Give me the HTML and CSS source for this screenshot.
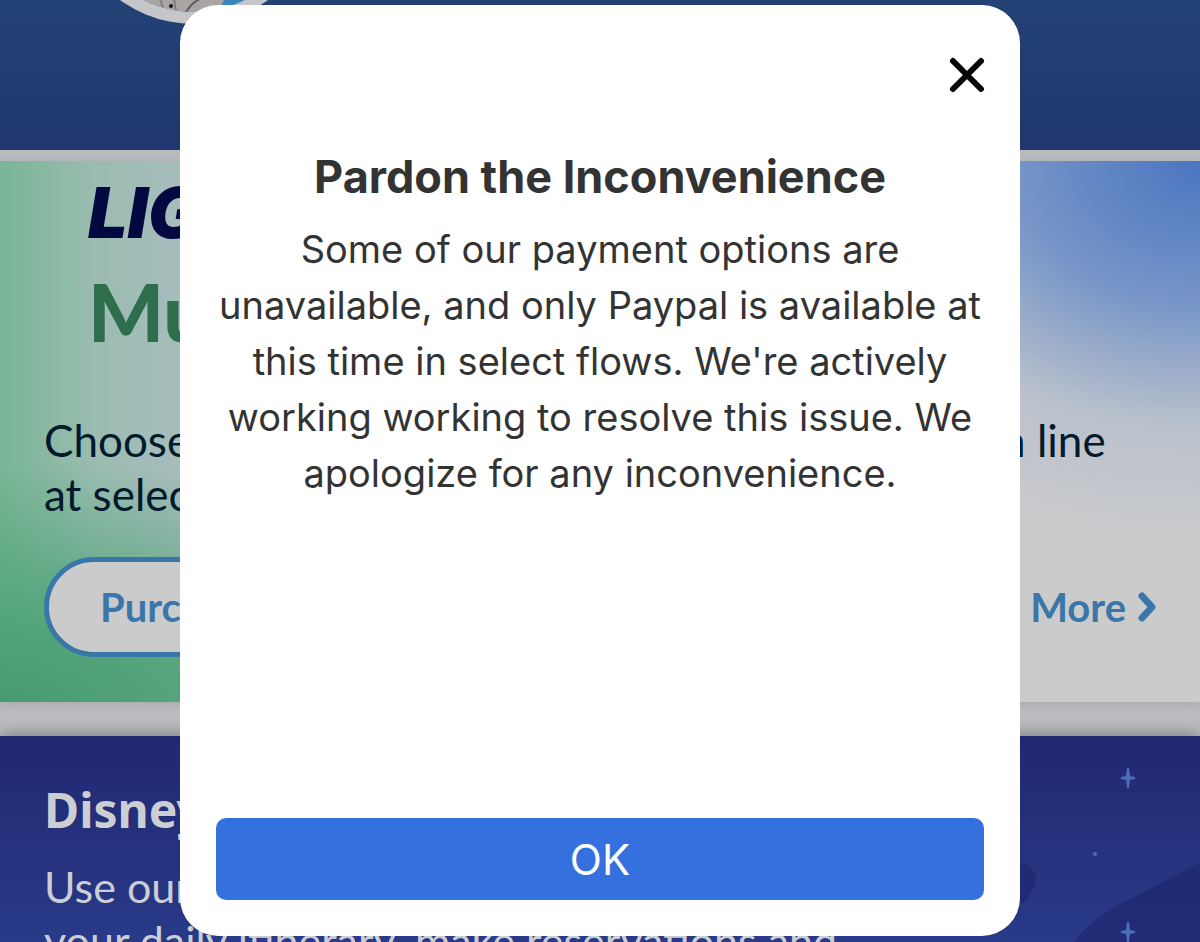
FILE: index.html
```html
<!DOCTYPE html>
<html lang="en">
<head>
    <meta charset="UTF-8">
    <meta name="viewport" content="width=device-width, initial-scale=1.0">
    <title>Pardon the Inconvenience</title>
    <link rel="stylesheet" href="styles.css">
</head>
<body>
    <div class="page">
        <header class="hero">
            <svg class="avatar" viewBox="0 228 252 24" aria-hidden="true">
                <defs>
                    <clipPath id="face"><circle cx="126" cy="126" r="114"/></clipPath>
                </defs>
                <circle cx="126" cy="126" r="126" fill="#c5c6c9"/>
                <g clip-path="url(#face)">
                    <rect x="0" y="220" width="252" height="32" fill="#3a86b8"/>
                    <path d="M70 220H160L148 244H84z" fill="#aaa4a3"/>
                    <path d="M92 226l4 14M106 226l2 14" stroke="#817b7c" stroke-width="2"/>
                    <path d="M134 226q-10 4-16 14" stroke="#625963" stroke-width="2" fill="none"/>
                    <circle cx="103" cy="234" r="2" fill="#161827"/>
                </g>
            </svg>
        </header>

        <section class="pass-card">
            <h2 class="pass-title">
                <span class="pass-brand">LIGHTNING LANE</span>
                <span class="pass-name">Multi Pass</span>
            </h2>
            <p class="pass-text">Choose arrival times and spend less time waiting in line<br>at select attractions.</p>
            <div class="pass-actions">
                <button class="purchase" type="button">Purchase</button>
                <a class="more" href="#">Learn More
                    <svg class="chevron" viewBox="0 0 18 30" aria-hidden="true"><path d="M4 4l10 11L4 26"/></svg>
                </a>
            </div>
        </section>

        <section class="promo">
            <svg class="night" viewBox="0 0 220 206" aria-hidden="true">
                <path class="hill" d="M20 122Q56 126 56 142Q56 158 36 172L10 180z"/>
                <path class="hill" d="M220 127L158 159Q112 180 94 206H220z"/>
                <path class="star" d="M147 32h2l1 8 5 1v2l-5 1-1 8h-2l-1-8-5-1v-2l5-1zM147 186h2l1 8 5 1v2l-5 1-1 8h-2l-1-8-5-1v-2l5-1z"/>
                <circle class="star" cx="115" cy="118" r="2"/>
            </svg>
            <h2 class="promo-title">Disney Genie</h2>
            <p class="promo-text">Use our planning tools to create<br>your daily itinerary, make reservations and</p>
        </section>
    </div>

    <!-- Modal -->
    <div class="overlay">
        <div class="modal" role="dialog" aria-modal="true" aria-labelledby="modal-title">
            <button class="close" type="button" aria-label="Close">
                <svg viewBox="0 0 34 34" aria-hidden="true"><path d="M3 4l28 28M31 4L3 32"/></svg>
            </button>
            <h1 class="modal-title" id="modal-title">Pardon the Inconvenience</h1>
            <p class="modal-text">Some of our payment options are unavailable, and only Paypal is available at this time in select flows. We're actively working working to resolve this issue. We apologize for any inconvenience.</p>
            <button class="ok" type="button">OK</button>
        </div>
    </div>

    <script>
        const overlay = document.querySelector('.overlay');

        function closeModal() {
            overlay.style.display = 'none';
        }

        document.querySelector('.close').onclick = closeModal;
        document.querySelector('.ok').onclick = closeModal;
    </script>
</body>
</html>
```
FILE: styles.css
```css
* {
    box-sizing: border-box;
}
body {
    margin: 0;
    font-family: Lato, "Open Sans", sans-serif;
    background-color: #bbbcbf;
}
h1, h2, p {
    margin: 0;
}
button {
    font-family: inherit;
    cursor: pointer;
}
.page {
    display: flex;
    flex-direction: column;
    height: 100vh;
    overflow: hidden;
    white-space: nowrap;
}

/* Top banner with the profile picture */
.hero {
    flex: none;
    height: 150px;
    padding-left: 68px;
    background: linear-gradient(#224274, #20366f);
}
.avatar {
    display: block;
    width: 252px;
    height: 24px;
}

/* Lightning Lane card */
.pass-card {
    flex: none;
    margin: 11px 0 34px;
    padding: 12px 44px 45px;
    background:
        radial-gradient(ellipse 500px 380px at 100% 0, #4a75c0, rgba(92, 132, 198, 0.75) 38%, rgba(160, 178, 204, 0.4) 70%, rgba(200, 202, 206, 0) 100%),
        radial-gradient(ellipse 600px 240px at 0 100%, #489b71, rgba(78, 163, 120, 0.9) 35%, rgba(130, 180, 155, 0) 100%),
        linear-gradient(90deg, #78b695, #9bbcb1 8%, #abbdc0 18%, #c9cacb 50%, #cbcbcc);
    box-shadow: 0 2px 12px rgba(0, 0, 0, 0.1);
}
.pass-title {
    padding-left: 44px;
    font-weight: 900;
}
.pass-brand, .pass-name {
    display: block;
}
.pass-brand {
    font-family: Inter, sans-serif;
    font-size: 70px;
    line-height: 80px;
    font-style: italic;
    color: #030940;
}
.pass-name {
    font-size: 80px;
    line-height: 116px;
    color: #2f6e4c;
}
.pass-text {
    margin-top: 44px;
    font-size: 44px;
    line-height: 54px;
    color: #031a2c;
}
.pass-actions {
    display: flex;
    justify-content: space-between;
    align-items: center;
    margin-top: 36px;
}
.purchase {
    height: 100px;
    padding: 0 51px;
    border: 5px solid #3a76aa;
    border-radius: 50px;
    background-color: #cbcbcc;
    color: #3a76aa;
    font-size: 40px;
    font-weight: 700;
}
.more {
    display: flex;
    align-items: center;
    gap: 12px;
    color: #3a76aa;
    font-size: 40px;
    font-weight: 700;
    text-decoration: none;
}
.chevron {
    width: 18px;
    height: 30px;
    fill: none;
    stroke: #3a76aa;
    stroke-width: 7;
    stroke-linecap: round;
    stroke-linejoin: round;
}

/* Planning section */
.promo {
    position: relative;
    flex: 1;
    padding: 44px 44px 0;
    overflow: hidden;
    background: linear-gradient(#222871, #283a88);
    box-shadow: 0 0 16px rgba(0, 0, 0, 0.4);
    color: #cdced3;
}
.night {
    position: absolute;
    top: 0;
    right: 0;
    width: 220px;
    height: 206px;
}
.hill {
    fill: #20296f;
    opacity: 0.8;
}
.star {
    fill: #4c6cba;
}
.promo-title {
    font-family: "Noto Sans", sans-serif;
    font-size: 48px;
    line-height: 60px;
    font-weight: 700;
}
.promo-text {
    margin-top: 20px;
    font-size: 43px;
    line-height: 54px;
}

/* Modal */
.overlay {
    position: fixed;
    inset: 0;
    display: flex;
    justify-content: center;
    padding: 5px 0 6px;
}
.modal {
    display: flex;
    flex-direction: column;
    width: 70%;
    padding: 52px 36px 36px;
    border-radius: 38px;
    background-color: #fff;
    font-family: Inter, "Liberation Sans", sans-serif;
    color: #333;
    text-align: center;
}
.close {
    align-self: flex-end;
    width: 34px;
    height: 34px;
    padding: 0;
    border: none;
    background: none;
}
.close svg {
    display: block;
    overflow: visible;
    fill: none;
    stroke: #060606;
    stroke-width: 6;
    stroke-linecap: round;
}
.modal-title {
    margin-top: 58px;
    font-size: 45px;
    line-height: 56px;
    font-weight: 700;
}
.modal-text {
    margin-top: 16px;
    font-size: 38px;
    line-height: 56px;
}
.ok {
    height: 82px;
    margin-top: auto;
    border: none;
    border-radius: 10px;
    background-color: #3571de;
    color: #fff;
    font-size: 42px;
}
```
